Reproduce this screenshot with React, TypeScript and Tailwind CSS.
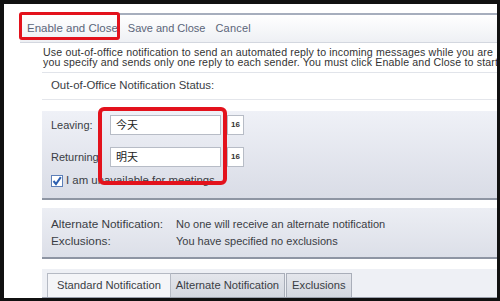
import type { ReactNode } from "react";

const font = { fontFamily: '"Liberation Sans", "Noto Sans CJK SC", sans-serif' };

function DateRow({ label, value }: { label: string; value: string }) {
  return (
    <div className="flex items-center h-[20px]">
      <span className="w-[59px] text-[11px] text-[#3a3d44] whitespace-nowrap overflow-visible">{label}</span>
      <div className="w-[111px] h-[20px] bg-white border border-[#b7bcc6] flex items-center pl-[5px] text-[11px] text-[#222]">
        {value}
      </div>
      <div className="ml-[6px] w-[17px] h-[20px] bg-white border border-[#b7bcc6] flex items-center justify-center text-[8px] font-bold text-[#333]">
        16
      </div>
    </div>
  );
}

function InfoRow({ label, children }: { label: string; children: ReactNode }) {
  return (
    <div className="flex items-center text-[#3a3d44] h-[17px]">
      <span className="w-[125px] whitespace-nowrap text-[11.8px]">{label}</span>
      <span className="whitespace-nowrap text-[11px]">{children}</span>
    </div>
  );
}

export default function App() {
  return (
    <div className="w-[500px] h-[301px] bg-[#111] pt-[4px] pl-[4px] pr-[3px] pb-[3px]" style={font}>
      <div className="relative w-full h-full bg-white overflow-hidden flex flex-col">
        {/* toolbar */}
        <div className="mt-[9px] ml-[16px] h-[30px] border-t-2 border-[#a6aebd] border-b border-b-[#d3d7df] bg-gradient-to-b from-white to-[#eef0f4] flex items-center gap-[10px] pl-[7px] text-[11.5px] text-[#5b6579]">
          <span>Enable and Close</span>
          <span className="text-[11px]">Save and Close</span>
          <span className="text-[11px] tracking-[0.2px]">Cancel</span>
        </div>

        {/* description */}
        <div className="ml-[38px] pt-[4px] pb-[5px] border-b border-[#e1e4ea] text-[10.6px] tracking-[0.15px] leading-[10px] text-[#333] whitespace-nowrap pl-[1px] overflow-hidden">
          <div>Use out-of-office notification to send an automated reply to incoming messages while you are</div>
          <div>you specify and sends only one reply to each sender. You must click Enable and Close to start</div>
        </div>

        <div className="ml-[38px] h-[27px] border-b border-[#e4e6eb] flex items-end pb-[5px] pl-[9px] text-[11.4px] text-[#3a3d44]">
          Out-of-Office Notification Status:
        </div>

        {/* status panel */}
        <div className="ml-[38px] mt-[11px] h-[89px] bg-gradient-to-b from-[#eff1f7] to-[#d9dce6] border-b-2 border-[#8e95a3] pl-[9px] pt-[4px] flex flex-col gap-[12px]">
          <DateRow label="Leaving:" value="今天" />
          <div className="flex flex-col gap-[5px]">
            <DateRow label="Returning:" value="明天" />
            <label className="flex items-center gap-[3px] text-[11.4px] text-[#3a3d44]">
              <span className="w-[12px] h-[12px] bg-white border border-[#5d7fb8] flex items-center justify-center">
                <svg width="10" height="10" viewBox="0 0 10 10">
                  <path d="M1.5 5 L4 8 L8.8 1.2" fill="none" stroke="#2d5fb0" strokeWidth="2" />
                </svg>
              </span>
              I am unavailable for meetings
            </label>
          </div>
        </div>

        {/* alternate panel */}
        <div className="ml-[38px] mt-[8px] h-[51px] bg-gradient-to-b from-[#eceef4] to-[#dcdfe8] border-b-2 border-[#8e95a3] pl-[9px] pt-[8px] flex flex-col">
          <InfoRow label="Alternate Notification:">No one will receive an alternate notification</InfoRow>
          <InfoRow label="Exclusions:">You have specified no exclusions</InfoRow>
        </div>

        {/* tabs */}
        <div className="ml-[38px] mt-[10px] flex-1 bg-[#eef0f5] border-b border-[#9aa0ac] flex items-end pl-[5px] text-[11.2px] text-[#3a3d44]">
          <div className="h-[24px] px-[9px] flex items-center bg-[#f4f5f8] border border-b-0 border-[#b5bac4]">
            Standard Notification
          </div>
          <div className="h-[24px] px-[5px] flex items-center bg-gradient-to-b from-[#e4e6ec] to-[#d4d8e0] border border-l-0 border-b-0 border-[#a9aeb9]">
            Alternate Notification
          </div>
          <div className="h-[24px] px-[5px] ml-[1px] flex items-center bg-gradient-to-b from-[#e4e6ec] to-[#d4d8e0] border border-b-0 border-[#a9aeb9]">
            Exclusions
          </div>
        </div>

        {/* annotation boxes */}
        <div className="absolute left-[15px] top-[8px] w-[101px] h-[28px] border-[3px] border-[#e3121c] rounded-[3px]" />
        <div className="absolute left-[94px] top-[103px] w-[129px] h-[78px] border-[4px] border-[#e3121c] rounded-[6px]" />
      </div>
    </div>
  );
}
